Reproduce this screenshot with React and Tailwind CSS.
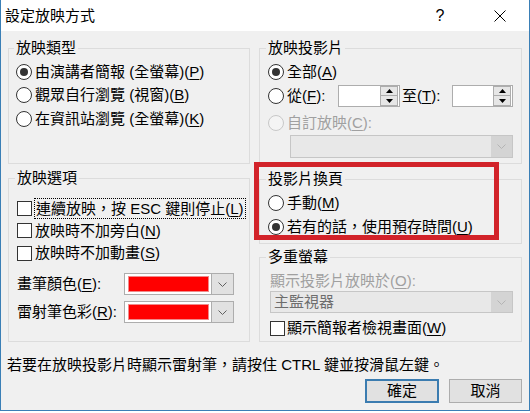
import React from "react";

function Key({ k }) {
  return (
    <>
      (<span className="underline underline-offset-2">{k}</span>)
    </>
  );
}

function Radio({ checked, disabled }) {
  return (
    <span
      className={`flex h-4 w-4 shrink-0 items-center justify-center rounded-full border ${
        disabled ? "border-[#c8c8c8] bg-[#f4f4f4]" : "border-[#333333] bg-white"
      }`}
    >
      {checked && <span className="h-2 w-2 rounded-full bg-[#333333]" />}
    </span>
  );
}

function Check() {
  return <span className="h-[15px] w-[15px] shrink-0 border border-[#333333] bg-white" />;
}

function Group({ title, className, children }) {
  return (
    <fieldset className={`border border-[#dcdcdc] ${className}`}>
      <legend className="-ml-[2px] px-[2px] leading-[20px]">{title}</legend>
      {children}
    </fieldset>
  );
}

function Chevron({ color }) {
  return (
    <svg width="9" height="5" viewBox="0 0 9 5">
      <path d="M0.5 0.5 L4.5 4.5 L8.5 0.5" fill="none" stroke={color} strokeWidth="1" />
    </svg>
  );
}

function Spinner({ className }) {
  return (
    <div className={`flex h-[22px] items-center justify-end border border-[#adadad] bg-white pr-[1px] ${className}`}>
      <div className="flex h-[20px] w-[18px] flex-col">
        <div className="flex h-[10px] items-center justify-center border border-[#adadad] bg-[#e6e6e6]">
          <svg width="7" height="4" viewBox="0 0 7 4">
            <path d="M3.5 0 L7 4 L0 4 Z" fill="#000" />
          </svg>
        </div>
        <div className="flex h-[10px] items-center justify-center border border-t-0 border-[#adadad] bg-[#e6e6e6]">
          <svg width="7" height="4" viewBox="0 0 7 4">
            <path d="M0 0 L7 0 L3.5 4 Z" fill="#000" />
          </svg>
        </div>
      </div>
    </div>
  );
}

function ColorCombo() {
  return (
    <div className="flex h-[22px] w-[110px] items-stretch border border-[#adadad] bg-white">
      <div className="flex flex-1 items-center py-[2px] pl-[3px] pr-[2px]">
        <div className="h-full w-full border border-[#f08a8a] bg-[#ff0000]" />
      </div>
      <div className="flex w-[22px] items-center justify-center border-l border-[#adadad] bg-[#e1e1e1]">
        <Chevron color="#606060" />
      </div>
    </div>
  );
}

function DisabledCombo({ className, text }) {
  return (
    <div className={`flex items-stretch border border-[#c6c6c6] bg-[#e8e8e8] ${className}`}>
      <div className="flex flex-1 items-center pl-[3px] leading-[20px] text-[#6d6d6d]">{text}</div>
      <div className="flex w-[21px] items-center justify-center bg-[#d4d4d4]">
        <Chevron color="#b4b4b4" />
      </div>
    </div>
  );
}

export default function App() {
  return (
    <div className="flex h-[411px] w-[530px] flex-col border-x border-b border-[#3a7fb6] bg-[#f0f0f0] font-['Liberation_Sans','Noto_Sans_CJK_TC',sans-serif] text-[15px] text-black">
      {/* title bar */}
      <div className="flex h-[31px] shrink-0 items-center bg-white pl-[4px] pr-[19px]">
        <span className="leading-[20px]">設定放映方式</span>
        <span className="ml-auto w-[20px] text-center text-[16px]">?</span>
        <span className="ml-[40px] flex w-[20px] justify-center">
          <svg width="12" height="12" viewBox="0 0 12 12">
            <path d="M0.5 0.5 L11.5 11.5 M11.5 0.5 L0.5 11.5" stroke="#000" strokeWidth="1" />
          </svg>
        </span>
      </div>

      <div className="flex gap-[9px] pl-[7px] pt-[7px]">
        {/* left column */}
        <div className="flex w-[242px] flex-col gap-[4px]">
          <Group title="放映類型" className="h-[126px] pl-[7px] pt-[2px]">
            <div className="flex h-[23.5px] items-center gap-[3px]">
              <Radio checked />
              <span>
                由演講者簡報 (全螢幕)<Key k="P" />
              </span>
            </div>
            <div className="flex h-[23.5px] items-center gap-[3px]">
              <Radio />
              <span>
                觀眾自行瀏覽 (視窗)<Key k="B" />
              </span>
            </div>
            <div className="flex h-[23.5px] items-center gap-[3px]">
              <Radio />
              <span>
                在資訊站瀏覽 (全螢幕)<Key k="K" />
              </span>
            </div>
          </Group>

          <Group title="放映選項" className="h-[174px] pl-[8px] pt-[9px]">
            <div className="flex h-[22.5px] items-center gap-[2px]">
              <Check />
              <span className="border border-dotted border-black px-[1px] leading-[19px]">
                連續放映，按 ESC 鍵則停止<Key k="L" />
              </span>
            </div>
            <div className="flex h-[22.5px] items-center gap-[3px]">
              <Check />
              <span>
                放映時不加旁白<Key k="N" />
              </span>
            </div>
            <div className="flex h-[22.5px] items-center gap-[3px]">
              <Check />
              <span>
                放映時不加動畫<Key k="S" />
              </span>
            </div>
            <div className="mt-[8.5px] flex flex-col gap-[6px]">
              <div className="flex h-[22px] items-center">
                <span className="w-[107px]">
                  畫筆顏色<Key k="E" />:
                </span>
                <ColorCombo />
              </div>
              <div className="flex h-[22px] items-center">
                <span className="w-[107px]">
                  雷射筆色彩<Key k="R" />:
                </span>
                <ColorCombo />
              </div>
            </div>
          </Group>
        </div>

        {/* right column */}
        <div className="relative flex w-[263px] flex-col">
          <Group title="放映投影片" className="h-[126px] pl-[8px] pr-[8px] pt-[2px]">
            <div className="flex h-6 items-center gap-[3px]">
              <Radio checked />
              <span>
                全部<Key k="A" />
              </span>
            </div>
            <div className="flex h-6 items-center">
              <div className="flex w-[70px] items-center gap-[3px]">
                <Radio />
                <span>
                  從<Key k="F" />:
                </span>
              </div>
              <Spinner className="w-[62px]" />
              <span className="ml-[2px] w-[50px]">
                至<Key k="T" />:
              </span>
              <Spinner className="w-[61px]" />
            </div>
            <div className="mt-[3px] flex h-6 items-center gap-[3px] text-[#a0a0a0]">
              <Radio disabled />
              <span>
                自訂放映<Key k="C" />:
              </span>
            </div>
            <DisabledCombo className="ml-[22px] h-[23px] w-[223px]" text="" />
          </Group>

          <Group title="投影片換頁" className="mt-[5px] h-[75px] pl-[8px] pt-[2px]">
            <div className="flex h-6 items-center gap-[3px]">
              <Radio />
              <span>
                手動<Key k="M" />
              </span>
            </div>
            <div className="flex h-6 items-center gap-[3px]">
              <Radio checked />
              <span>
                若有的話，使用預存時間<Key k="U" />
              </span>
            </div>
          </Group>

          <Group title="多重螢幕" className="mt-[3px] h-[95px] pl-[8px] pr-[8px] pt-[4px]">
            <div className="ml-[2px] leading-[20px] text-[#a0a0a0]">
              顯示投影片放映於<Key k="O" />:
            </div>
            <DisabledCombo className="ml-[2px] h-[22px] w-[243px]" text="主監視器" />
            <div className="ml-[2px] mt-[3px] flex h-6 items-center gap-[2px]">
              <Check />
              <span>
                顯示簡報者檢視畫面<Key k="W" />
              </span>
            </div>
          </Group>

          {/* red annotation frame */}
          <div className="pointer-events-none absolute left-[-5px] top-[124px] h-[78px] w-[245px] border-[5px] border-[#d2232a]" />
        </div>
      </div>

      <div className="mt-[13px] h-[20px] pl-[6px] leading-[20px]">
        若要在放映投影片時顯示雷射筆，請按住 CTRL 鍵並按滑鼠左鍵。
      </div>

      <div className="mt-[4px] flex justify-end gap-[10px] pr-[7px]">
        <button className="flex h-[24px] w-[74px] items-center justify-center border-2 border-[#3b7cb0] bg-[#e1e1e1] leading-[20px]">
          確定
        </button>
        <button className="flex h-[24px] w-[73px] items-center justify-center border border-[#adadad] bg-[#e1e1e1] leading-[20px]">
          取消
        </button>
      </div>
    </div>
  );
}
